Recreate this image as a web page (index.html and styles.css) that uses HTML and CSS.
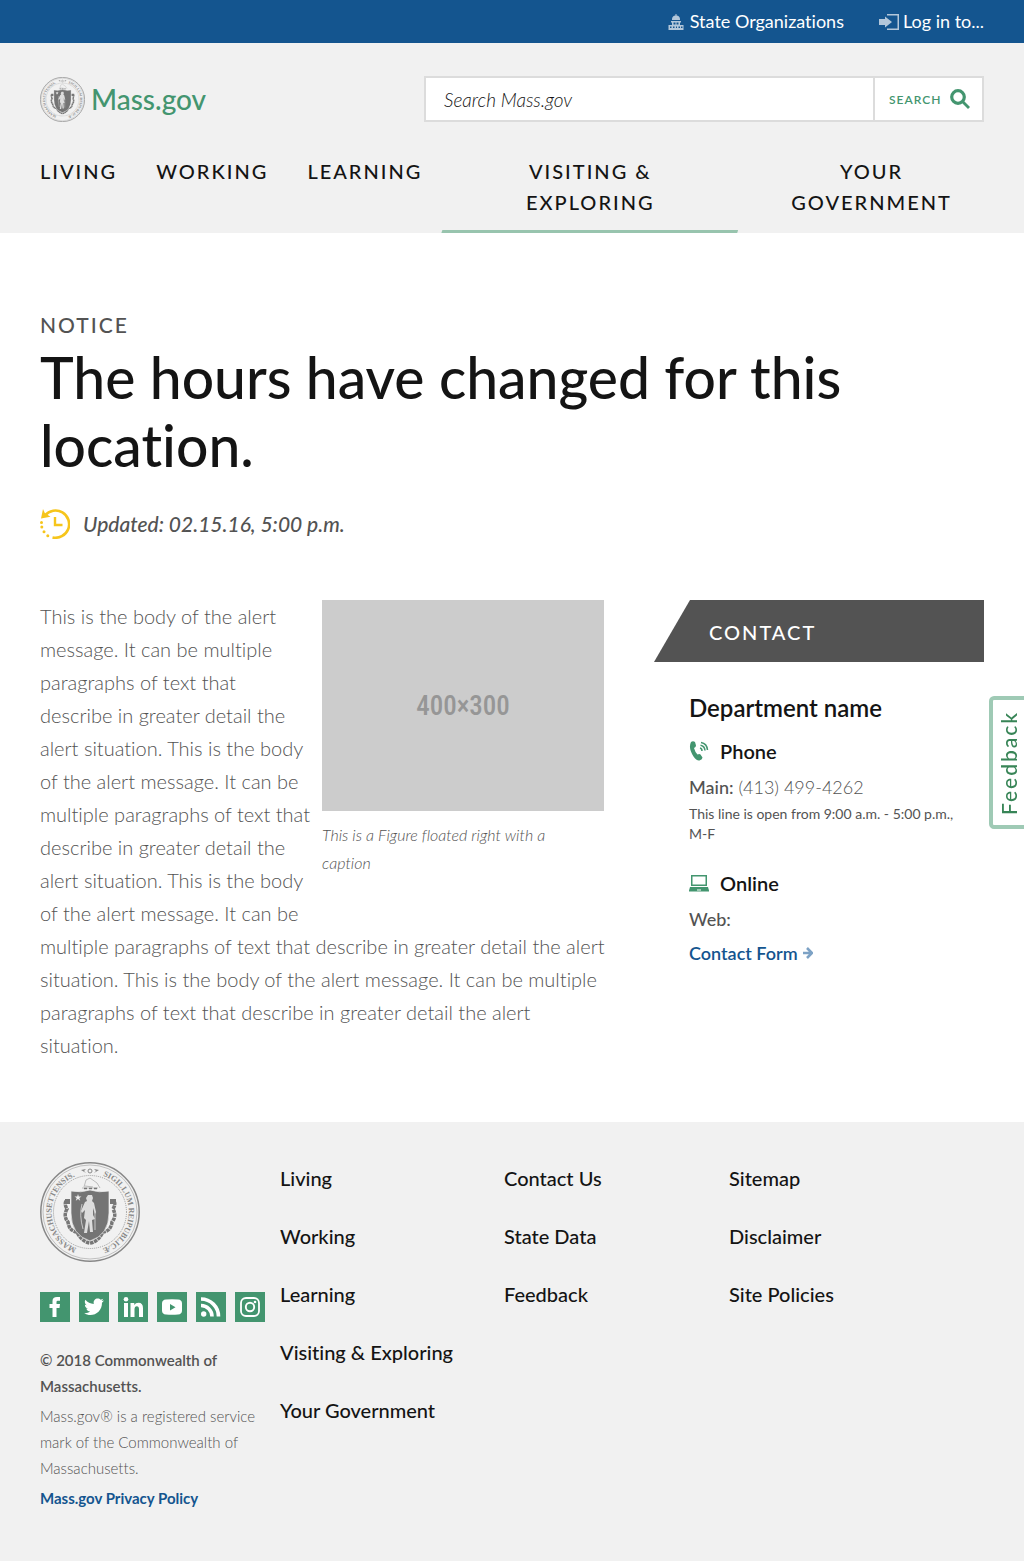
FILE: index.html
```html
<!DOCTYPE html>
<html lang="en">
<head>
<meta charset="utf-8">
<meta name="viewport" content="width=device-width, initial-scale=1">
<title>Notice | Mass.gov</title>
<link rel="stylesheet" href="styles.css">
</head>
<body>
<div class="utility">
  <a class="utility-link" href="#"><svg class="icon-capitol" viewBox="0 0 16 16" aria-hidden="true"><path d="M7.500 0h1v1.500A4 4 0 0 1 12 5v1H4V5a4 4 0 0 1 3.500-3.500zM3 7h10v1.500h-1V11h3.500v5h-15v-5H4V8.500H3zM5.500 8.500v2H7v-2zm2 0v2h1v-2zm1.500 0v2h1.500v-2zM2 12.500V14h1.500v-1.500zm3 0V14h1.500v-1.500zm3 0V14h1v-1.500zm2.500 0V14H12v-1.500zm2.500 0V14h1.500v-1.500z" fill-rule="evenodd"/></svg>State Organizations</a>
  <a class="utility-link utility-login" href="#"><svg class="icon-login" viewBox="0 0 20 16" aria-hidden="true"><path d="M0 5h6V2.500L13 8l-7 5.500V11H0zM8 0h12v16H8v-1.500h10.500v-13H8z"/></svg>Log in to...</a>
</div>

<header class="header">
  <div class="brand-row">
    <a class="brand" href="#">
      <svg class="seal-small" viewBox="0 0 100 100" aria-hidden="true"><use href="#seal"/></svg>
      <span>Mass.gov</span>
    </a>
    <form class="search">
      <input class="search-field" type="text" placeholder="Search Mass.gov" aria-label="Search Mass.gov">
      <button class="search-button" type="submit">Search<svg viewBox="0 0 20 20" aria-hidden="true"><circle cx="8" cy="8" r="6.300" fill="none" stroke="currentColor" stroke-width="3.200"/><path d="M12 14l2-2 6 6-2 2z" fill="currentColor"/></svg></button>
    </form>
  </div>
  <nav class="main-nav" aria-label="Main">
    <a href="#">Living</a>
    <a href="#">Working</a>
    <a href="#">Learning</a>
    <a class="wide active" href="#">Visiting &amp;<br>Exploring</a>
    <a class="last" href="#">Your<br>Government</a>
  </nav>
</header>

<main class="page">
  <p class="eyebrow">Notice</p>
  <h1>The hours have changed for this location.</h1>
  <p class="updated"><svg viewBox="0 0 30 30" aria-hidden="true"><path d="M5 6.500A13.600 13.600 0 1 1 12.500 28.400" fill="none" stroke="#f6c51b" stroke-width="2.600"/><path d="M3 0l1.800 4L10.500 7.800 1 9.500z" fill="#f6c51b"/><path d="M15 8v8h7.500" fill="none" stroke="#f6c51b" stroke-width="2.400"/><g fill="#f6c51b"><circle cx="1.500" cy="13.500" r="1.500"/><circle cx="1.800" cy="18" r="1.500"/><circle cx="4" cy="22.800" r="1.500"/><circle cx="7.800" cy="26.800" r="1.500"/></g></svg>Updated: 02.15.16, 5:00 p.m.</p>

  <div class="columns">
    <div class="story">
      <figure>
        <svg class="placeholder" viewBox="0 0 282 211"><path d="M0 0h282v211H0z" fill="#ccc"/><text x="141" y="115" text-anchor="middle">400×300</text></svg>
        <figcaption>This is a Figure floated right with a caption</figcaption>
      </figure>
      <p>This is the body of the alert message. It can be multiple paragraphs of text that describe&nbsp;in greater detail the alert situation. This is the body of the alert message. It can be multiple paragraphs of text that describe&nbsp;in greater detail the alert situation. This is the body of the alert message. It can be multiple paragraphs of text that describe&nbsp;in greater detail the alert situation. This is the body of the alert message. It can be multiple paragraphs of text that describe&nbsp;in greater detail the alert situation.</p>
    </div>
    <aside class="contact">
      <h2 class="contact-title">Contact</h2>
      <div class="contact-body">
        <h3>Department name</h3>
        <h4><svg viewBox="0 0 20 20" aria-hidden="true"><path d="M2 1Q4-.5 6 1l1 3.500q0 1.500-2 2.500 1 4 3.500 6.500 2-1 3 0l2 3q0 2-3 3-3 .5-6-4Q-1 7 2 1z" fill="#43956f"/><path d="M11 7q2 .5 2 3M11.500 4.300q4 .7 4.500 5.200M12 1.500q6 1 6.500 7.500" fill="none" stroke="#43956f" stroke-width="1.500"/></svg>Phone</h4>
        <p class="detail"><b>Main:</b> (413) 499-4262</p>
        <p class="hours">This line is open from 9:00 a.m. - 5:00 p.m., M-F</p>
        <h4><svg viewBox="0 0 20 20" aria-hidden="true"><path d="M2 2h16v11H2zm1.500 1.500v8h13v-8zM1 14h18l1 3.500v1H0v-1zM8 16.500v1h4v-1z" fill="#43956f" fill-rule="evenodd"/></svg>Online</h4>
        <p class="detail"><b>Web:</b></p>
        <a class="form-link" href="#">Contact Form<svg viewBox="0 0 10 12" aria-hidden="true"><path d="M0 6h8.500M4 1l5 5-5 5" fill="none" stroke="#7da2c5" stroke-width="2.600"/></svg></a>
      </div>
    </aside>
  </div>
</main>

<button class="feedback" type="button">Feedback</button>

<footer class="footer">
  <div class="footer-info">
    <svg class="seal" viewBox="0 0 100 100" role="img" aria-label="Massachusetts state seal">
      <defs>
        <path id="ring-left" d="M36.500 86.100A38.500 38.500 0 0 1 41 12.600"/>
        <path id="ring-right" d="M63 13.800A38.500 38.500 0 0 1 47 88.500"/>
        <g id="seal">
          <circle cx="50" cy="50" r="49.200" fill="none" stroke="#888" stroke-width="1.500"/>
          <circle cx="50" cy="50" r="47" fill="none" stroke="#aaa" stroke-width=".7"/>
          <circle cx="50" cy="50" r="36.500" fill="none" stroke="#999" stroke-dasharray="1 1"/>
          <text class="seal-text"><textPath href="#ring-left">MASSACHUSETTENSIS.</textPath></text>
          <text class="seal-text"><textPath href="#ring-right">SIGILLUM REIPUBLICÆ</textPath></text>
          <path d="M41 8l5-1-2 2 2 2zm18 0l-5-1 2 2-2 2z" fill="#888"/>
          <circle cx="50" cy="9" r="2" fill="none" stroke="#888"/>
          <path d="M44 25l2-7 4-2 7 5 3 5M42 26h16M45 24l8 1" fill="none" stroke="#bbb" stroke-width="1"/>
          <path d="M44 26.500h13" stroke="#777" stroke-width="1.500" stroke-dasharray="3 2"/>
          <path d="M26 39q-2 3 1 8-4 7 1 13 1 9 9 10 5 10 13 11 8-1 13-11 8-1 9-10 5-6 1-13 3-5 1-8" fill="none" stroke="#777" stroke-width="3.500" stroke-dasharray="3.500 .7"/>
          <path d="M25 37h5v5h-5zm45 0h6v5h-6z" fill="#777"/>
          <path d="M31 29q10 2 19-1 9 3 19 1v22q0 22-19 28Q31 73 31 51z" fill="#747474" stroke="#eee" stroke-width=".7"/>
          <path d="M38 32l.8 2.500h2.700l-2.200 1.600.9 2.600-2.200-1.600-2.200 1.600.9-2.600-2.200-1.600h2.700z" fill="#f1f1f1"/>
          <path d="M48 33h4l1 3-1 3 2 2 2 9-1 2-2-6v7l2 4-3 1 1 12h-3l-1-11-2 12h-3l2-13-2-2 1-8-3 3-1-2 4-9 2-1-1-3z" fill="#ddd"/>
          <path d="M42 42q-3 11 1 25M55 50v18" fill="none" stroke="#ddd" stroke-width=".8"/>
        </g>
      </defs>
      <use href="#seal"/>
    </svg>
    <div class="social">
      <a href="#" aria-label="Facebook"><svg viewBox="0 0 30 30"><path d="M12.500 25v-9h-3v-4h3V9q0-4 4.500-4h3v3.800h-2.300q-1.200 0-1.200 1.300V12h3.500l-.5 4h-3v9z"/></svg></a>
      <a href="#" aria-label="Twitter"><svg viewBox="0 0 30 30"><path d="M25 8.500l-2 2.200C23.200 18 17.500 23 11.500 23c-2.400 0-4.500-.7-6.300-1.800 2.200.2 4.200-.4 5.900-1.700-1.800 0-3.200-1.200-3.800-2.800h1.800c-1.900-.5-3.200-2-3.200-4l1.800.5C5.900 12 5.200 9.600 6.400 7.700c2 2.500 5 4 8.400 4.200C14 8.500 16.400 6.500 18.700 6.500c1.200 0 2.300.5 3 1.300l2.600-1-1.700 2.200z"/></svg></a>
      <a href="#" aria-label="LinkedIn"><svg viewBox="0 0 30 30"><path d="M6 11h4v14H6zm6.500 0h3.800v2q1.200-2.300 4.200-2.300 4.500 0 4.500 5.500V25h-4v-7.800q0-3-2.200-3t-2.300 3V25h-4z"/><circle cx="8" cy="7.200" r="2.300"/></svg></a>
      <a href="#" aria-label="YouTube"><svg viewBox="0 0 30 30"><path d="M9 7.500q6-.7 12 0 4 .3 4 4v7q0 3.700-4 4-6 .7-12 0-4-.3-4-4v-7q0-3.700 4-4zM13 12v6.500l5.500-3.300z" fill-rule="evenodd"/></svg></a>
      <a href="#" aria-label="RSS"><svg viewBox="0 0 30 30"><circle cx="7.700" cy="22" r="2.700"/><path d="M5 13.500A11 11 0 0 1 16 24.500M5 7A17.500 17.500 0 0 1 22.500 24.500" fill="none" stroke="#fff" stroke-width="3.600"/></svg></a>
      <a href="#" aria-label="Instagram"><svg viewBox="0 0 30 30"><rect x="6" y="6" width="18" height="18" rx="5" fill="none" stroke="#fff" stroke-width="1.800"/><circle cx="15" cy="15" r="4.200" fill="none" stroke="#fff" stroke-width="1.900"/><circle cx="20" cy="10" r="1.300"/></svg></a>
    </div>
    <p class="copyright">© 2018 Commonwealth of Massachusetts.</p>
    <p class="legal">Mass.gov® is a registered service mark of the Commonwealth of Massachusetts.</p>
    <a class="privacy" href="#">Mass.gov Privacy Policy</a>
  </div>
  <nav class="footer-nav" aria-label="Footer">
    <div><a href="#">Living</a><a href="#">Working</a><a href="#">Learning</a><a href="#">Visiting &amp; Exploring</a><a href="#">Your Government</a></div>
    <div><a href="#">Contact Us</a><a href="#">State Data</a><a href="#">Feedback</a></div>
    <div><a href="#">Sitemap</a><a href="#">Disclaimer</a><a href="#">Site Policies</a></div>
  </nav>
</footer>
</body>
</html>
```
FILE: styles.css
```css
* { box-sizing: border-box; }
body {
  margin: 0;
  background: #fff;
  color: #141414;
  font-family: Lato, "Open Sans", sans-serif;
  font-size: 20px;
  font-variant-ligatures: none;
}
h1, h2, h3, h4, p, figure { margin: 0; }
a { color: inherit; text-decoration: none; }
svg { flex: none; }

.utility {
  display: flex;
  justify-content: flex-end;
  gap: 35px;
  height: 43px;
  padding: 0 40px;
  background: #14558f;
  color: #fff;
  font-size: 18px;
  line-height: 43px;
}
.utility-link { display: flex; align-items: center; gap: 6px; }
.utility-login { gap: 4px; }
.utility svg { height: 16px; fill: #b3c7da; }
.icon-capitol { width: 16px; }
.icon-login { width: 20px; }

.header { background: #f1f1f1; padding-top: 33px; }
.brand-row {
  display: flex;
  justify-content: space-between;
  align-items: center;
  padding: 0 40px;
}
.brand { display: flex; align-items: center; gap: 6px; color: #43956f; font-size: 28px; font-weight: 500; }
.seal-small { width: 45px; height: 45px; }
.seal-text { font: bold 8px "Liberation Serif", serif; fill: #888; }
.search {
  display: flex;
  width: 560px;
  height: 46px;
  border: 2px solid #dcdcdc;
  background: #fff;
}
.search-field {
  flex: 1;
  min-width: 0;
  padding: 0 18px;
  border: 0;
  background: none;
  font: italic 300 19px Lato, sans-serif;
}
.search-field::placeholder { color: #141414; opacity: 1; }
.search-button {
  display: flex;
  align-items: center;
  justify-content: space-between;
  width: 109px;
  padding: 0 12px 0 14px;
  border: 0;
  border-left: 2px solid #dcdcdc;
  background: none;
  color: #43956f;
  font: 600 12px Lato, sans-serif;
  letter-spacing: 1px;
  text-transform: uppercase;
}
.search-button svg { width: 20px; height: 20px; }

.main-nav { display: flex; padding: 34px 20px 0; }
.main-nav a {
  padding: 0 19px 15px 20px;
  font-weight: 500;
  line-height: 31px;
  letter-spacing: 2px;
  text-align: center;
  text-transform: uppercase;
}
.main-nav .wide { flex: 300; position: relative; }
.main-nav .last { flex: 264; }
.main-nav .active::after {
  content: "";
  position: absolute;
  right: 0;
  bottom: 0;
  left: 0;
  height: 3px;
  background: #98c4ae;
  clip-path: polygon(1px 0, 100% 0, calc(100% - 1px) 100%, 0 100%);
}

.page { padding: 77px 40px 60px; }
.eyebrow { color: #535353; font-size: 21px; font-weight: 500; line-height: 30px; letter-spacing: 2px; text-transform: uppercase; }
h1 { margin-top: 3px; font-size: 57px; font-weight: 500; line-height: 68px; }
.updated {
  display: flex;
  align-items: center;
  gap: 13px;
  margin-top: 30px;
  color: #535353;
  font-size: 21px;
  font-style: italic;
  font-weight: 500;
  line-height: 30px;
}
.updated svg { width: 30px; height: 30px; }
.columns { display: grid; grid-template-columns: minmax(0, 1fr) 330px; gap: 46px; margin-top: 61px; }
.story { color: #535353; font-weight: 300; line-height: 33px; }
.story figure { float: right; width: 286px; padding-right: 4px; margin-left: 4px; }
.placeholder { display: block; width: 100%; }
.placeholder text { fill: #969696; font: 500 27px "Roboto Condensed", Roboto, sans-serif; }
.story figcaption { padding: 10px 32px 30px 0; font-size: 16px; font-style: italic; line-height: 28px; }

.contact { color: #535353; }
.contact-title {
  height: 62px;
  padding-left: 55px;
  background: #535353;
  clip-path: polygon(36px 0, 100% 0, 100% 100%, 0 100%);
  color: #fff;
  font-size: 20px;
  font-weight: 500;
  line-height: 64px;
  letter-spacing: 2px;
  text-transform: uppercase;
}
.contact-body { padding: 30px 0 0 35px; }
.contact h3 { color: #141414; font-size: 24px; font-weight: 600; line-height: 32px; }
.contact h4 {
  display: flex;
  align-items: center;
  gap: 11px;
  margin-top: 12px;
  color: #141414;
  font-size: 20px;
  font-weight: 600;
  line-height: 30px;
}
.contact h4 svg { width: 20px; height: 20px; }
.detail { margin-top: 8px; font-size: 18px; font-weight: 300; line-height: 26px; }
.detail b { font-weight: 500; }
.hours { margin: 4px 0 24px; padding-right: 20px; font-size: 14px; line-height: 20px; }
.form-link { display: flex; align-items: center; gap: 5px; margin-top: 8px; color: #14558f; font-size: 18px; font-weight: 600; line-height: 26px; }
.form-link svg { width: 10px; height: 12px; }

.feedback {
  position: fixed;
  top: 696px;
  right: -4px;
  height: 133px;
  width: 39px;
  padding: 0;
  border: 4px solid #9fcab5;
  border-radius: 0 5px 5px 0;
  background: #fff;
  color: #388557;
  font: 500 21px Lato, sans-serif;
  letter-spacing: 2px;
  writing-mode: vertical-rl;
  transform: rotate(180deg);
}

.footer { display: flex; gap: 15px; padding: 40px 15px 50px 40px; background: #f1f1f1; }
.footer-info { flex: 0 0 225px; color: #535353; font-size: 15px; line-height: 26px; }
.seal { display: block; width: 100px; height: 100px; }
.social { display: flex; gap: 9px; margin: 30px 0 25px; }
.social a { width: 30px; height: 30px; background: #43956f; }
.social svg { display: block; fill: #fff; }
.copyright { font-weight: 600; }
.legal { margin: 4px 0; font-weight: 300; }
.privacy { color: #14558f; font-weight: 700; }
.footer-nav { display: grid; flex: 1; grid-template-columns: 224px 225px 1fr; align-items: start; }
.footer-nav div { display: grid; gap: 26px; }
.footer-nav a { font-weight: 500; line-height: 32px; }
```
